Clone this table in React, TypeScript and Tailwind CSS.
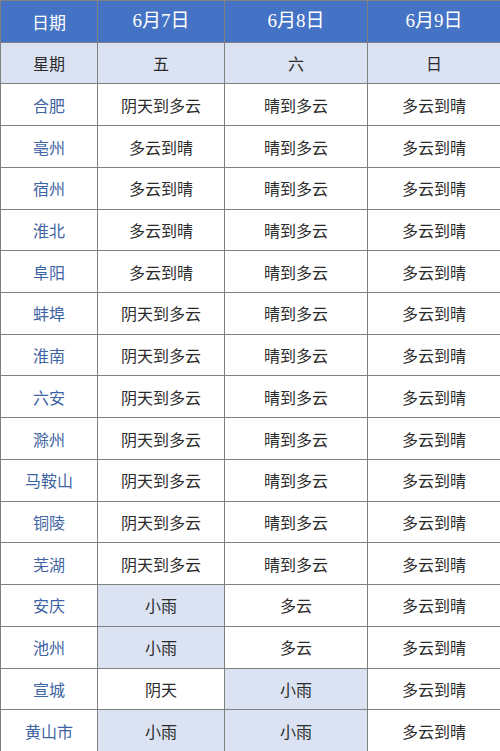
const days = ["6月7日", "6月8日", "6月9日"]
const weekdays = ["五", "六", "日"]

// [city, d7, d8, d9, highlight7, highlight8]
const rows: [string, string, string, string, boolean?, boolean?][] = [
  ["合肥", "阴天到多云", "晴到多云", "多云到晴"],
  ["亳州", "多云到晴", "晴到多云", "多云到晴"],
  ["宿州", "多云到晴", "晴到多云", "多云到晴"],
  ["淮北", "多云到晴", "晴到多云", "多云到晴"],
  ["阜阳", "多云到晴", "晴到多云", "多云到晴"],
  ["蚌埠", "阴天到多云", "晴到多云", "多云到晴"],
  ["淮南", "阴天到多云", "晴到多云", "多云到晴"],
  ["六安", "阴天到多云", "晴到多云", "多云到晴"],
  ["滁州", "阴天到多云", "晴到多云", "多云到晴"],
  ["马鞍山", "阴天到多云", "晴到多云", "多云到晴"],
  ["铜陵", "阴天到多云", "晴到多云", "多云到晴"],
  ["芜湖", "阴天到多云", "晴到多云", "多云到晴"],
  ["安庆", "小雨", "多云", "多云到晴", true],
  ["池州", "小雨", "多云", "多云到晴", true],
  ["宣城", "阴天", "小雨", "多云到晴", false, true],
  ["黄山市", "小雨", "小雨", "多云到晴", true, true],
]

const cell = "flex items-center justify-center border-r border-b border-[#808080]"

export default function App() {
  return (
    <div
      className="w-[500px] h-[751px] overflow-hidden bg-white text-[16px] text-[#2b2b2b]"
      style={{ fontFamily: '"Noto Sans CJK SC", sans-serif' }}
    >
      <div className="grid grid-cols-[97px_127px_143px_133px] grid-rows-[repeat(18,41.72px)] border-l border-t border-[#808080]">
        {/* Header */}
        <div className={`${cell} bg-[#4472c4] text-white text-[17px]`}>日期</div>
        {days.map((d) => (
          <div
            key={d}
            className={`${cell} bg-[#4472c4] text-white text-[19px]`}
            style={{ fontFamily: '"Liberation Serif", "Noto Sans CJK SC", serif' }}
          >
            {d}
          </div>
        ))}

        {/* Weekday row */}
        <div className={`${cell} bg-[#dbe3f2]`}>星期</div>
        {weekdays.map((w) => (
          <div key={w} className={`${cell} bg-[#dbe3f2]`}>
            {w}
          </div>
        ))}

        {rows.map(([city, a, b, c, h7, h8]) => (
          <div key={city} className="contents">
            <div className={`${cell} text-[#3f64a3]`}>{city}</div>
            <div className={`${cell} ${h7 ? "bg-[#dbe3f2]" : ""}`}>{a}</div>
            <div className={`${cell} ${h8 ? "bg-[#dbe3f2]" : ""}`}>{b}</div>
            <div className={cell}>{c}</div>
          </div>
        ))}
      </div>
    </div>
  )
}
